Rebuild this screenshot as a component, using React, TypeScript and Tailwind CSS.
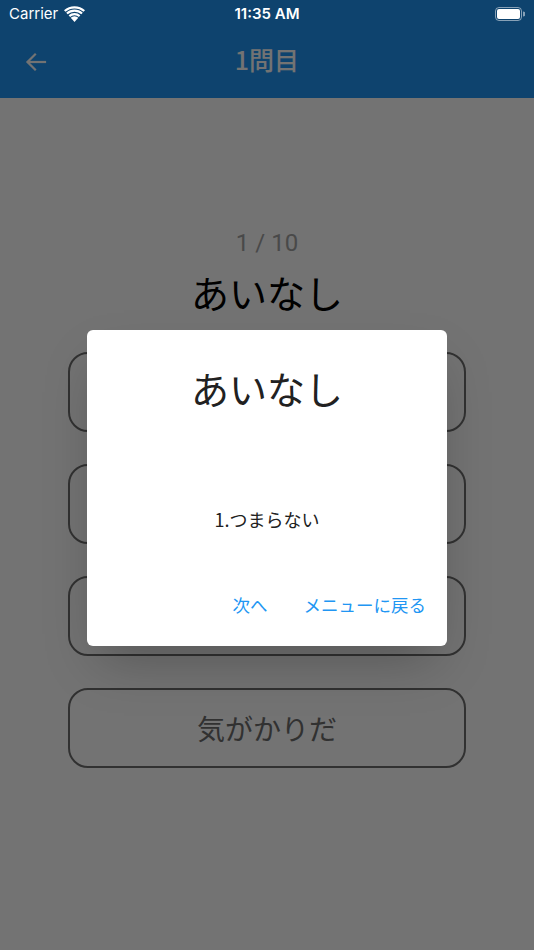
import React from 'react'

const jp = { fontFamily: '"Noto Sans CJK JP", "Noto Sans", sans-serif' }
const latin = { fontFamily: 'Roboto, "Noto Sans CJK JP", sans-serif' }

const choices = ['つまらない', 'たよりない', 'ふさわしくない', '気がかりだ']

function Wifi() {
    return (
        <svg width="21" height="16" viewBox="0 0 20 15" fill="white">
            <path d="M10 15 L6.4 11 A5.2 5.2 0 0 1 13.6 11 Z" />
            <path d="M4.4 8.8 A8.2 8.2 0 0 1 15.6 8.8 L14.2 10.3 A6.2 6.2 0 0 0 5.8 10.3 Z" />
            <path d="M2.1 6.3 A11.6 11.6 0 0 1 17.9 6.3 L16.5 7.8 A9.6 9.6 0 0 0 3.5 7.8 Z" />
            <path d="M0 3.9 A15 15 0 0 1 20 3.9 L18.6 5.4 A13 13 0 0 0 1.4 5.4 Z" />
        </svg>
    )
}

function Battery() {
    return (
        <svg width="30" height="14" viewBox="0 0 30 14">
            <rect x="0.5" y="0.5" width="26" height="13" rx="3.5" fill="none" stroke="white" strokeOpacity="0.5" />
            <rect x="2" y="2" width="23" height="10" rx="2" fill="white" />
            <path d="M28 4.5 A2 2 0 0 1 28 9.5 Z" fill="white" fillOpacity="0.5" />
        </svg>
    )
}

export default function App() {
    return (
        <div className="relative h-[950px] w-full overflow-hidden bg-white">
            {/* App bar */}
            <div className="h-[98px] bg-[#2196F3] pt-[28px]">
                <div className="relative flex h-[70px] items-center justify-center pb-[6px]">
                    <svg className="absolute left-[24px] top-[22px]" width="24" height="24" viewBox="0 0 24 24" fill="none" stroke="white" strokeWidth="2.2" strokeLinecap="square">
                        <path d="M21 12 H4" />
                        <path d="M11 4.5 L3.5 12 L11 19.5" />
                    </svg>
                    <span className="text-[25px] font-medium text-white" style={jp}>1問目</span>
                </div>
            </div>

            {/* Quiz body */}
            <div className="flex flex-col items-center">
                <div className="mt-[129px] text-[24px] leading-[32px] text-[#a3a3a3]" style={latin}>1 / 10</div>
                <div className="mt-[8px] text-[38px] leading-[50px] text-black" style={jp}>あいなし</div>
                <div className="mt-[35px] flex w-[398px] flex-col gap-[32px]">
                    {choices.map((c) => (
                        <div key={c} className="flex h-[80px] items-center justify-center rounded-[20px] border-[2.5px] border-[#6e6e6e] text-[28px] text-[#6e6e6e]" style={jp}>
                            {c}
                        </div>
                    ))}
                </div>
            </div>

            {/* Dim overlay + dialog */}
            <div className="absolute inset-0 flex flex-col items-center bg-black/55 pt-[330px]">
                <div className="flex h-[316px] w-[360px] flex-col rounded-[6px] bg-white shadow-2xl" style={jp}>
                    <div className="pt-[30px] text-center text-[38px] leading-[56px] text-[#212121]">あいなし</div>
                    <div className="mt-[89px] text-center text-[18px] leading-[28px] text-[#212121]">1.つまらない</div>
                    <div className="mt-[60px] flex justify-end gap-[36px] pr-[21px] text-[17.5px] leading-[24px] text-[#2196F3]">
                        <span>次へ</span>
                        <span>メニューに戻る</span>
                    </div>
                </div>
            </div>

            {/* Status bar */}
            <div className="absolute inset-x-0 top-0 flex h-[28px] items-center justify-between px-[9px] text-[15px] text-white" style={{ fontFamily: 'Inter, "Noto Sans", sans-serif' }}>
                <div className="flex items-center gap-[6px]">
                    <span>Carrier</span>
                    <Wifi />
                </div>
                <span className="absolute left-1/2 -translate-x-1/2 font-semibold">11:35 AM</span>
                <Battery />
            </div>
        </div>
    )
}
